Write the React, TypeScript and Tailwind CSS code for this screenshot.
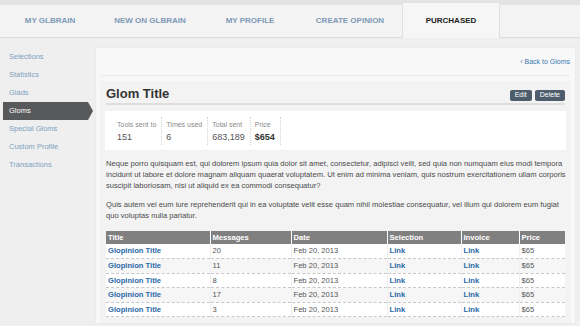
const tabs = ["MY GLBRAIN", "NEW ON GLBRAIN", "MY PROFILE", "CREATE OPINION", "PURCHASED"];
const side = ["Selections", "Statistics", "Glads", "Gloms", "Special Gloms", "Custom Profile", "Transactions"];
const stats = [
  { label: "Tools sent to", value: "151" },
  { label: "Times used", value: "6" },
  { label: "Total sent", value: "683,189" },
  { label: "Price", value: "$654", bold: true },
];
const rows = ["20", "11", "8", "17", "3"];

export default function App() {
  return (
    <div className="w-[580px] h-[326px] overflow-hidden bg-[#efefef] font-['Liberation_Sans',Arial,sans-serif]">
      {/* top nav */}
      <div className="h-[5px] bg-[#e4e4e4]"></div>
      <div className="h-[33px] flex bg-[#f3f3f3] border-b border-[#dcdcdc]">
        {tabs.map((t) => {
          const active = t === "PURCHASED";
          return (
            <div
              key={t}
              className={
                active
                  ? "w-[98px] ml-[2px] -mt-[3px] h-[36px] flex items-center justify-center bg-[#f6f6f6] border-x border-t border-[#e0e0e0] text-[8px] font-bold text-[#222]"
                  : "w-[100px] flex items-center justify-center text-[8px] font-bold text-[#7d9ab6]"
              }
            >
              {t}
            </div>
          );
        })}
      </div>

      <div className="flex pt-[9px]">
        {/* sidebar */}
        <div className="w-[95px] shrink-0 pt-[1px]">
          {side.map((s) => {
            const active = s === "Gloms";
            return active ? (
              <div key={s} className="relative h-[18px] ml-[3px] w-[85px] bg-[#58595b] flex items-center pl-[6px] text-[7.5px] text-white">
                {s}
                <div className="absolute right-[-5px] top-0 w-0 h-0 border-y-[9px] border-y-transparent border-l-[5px] border-l-[#58595b]"></div>
              </div>
            ) : (
              <div key={s} className="h-[18px] flex items-center pl-[9px] text-[7.5px] text-[#80a2c0]">
                {s}
              </div>
            );
          })}
        </div>

        {/* main panel */}
        <div className="w-[481px] bg-[#f8f8f8] border border-[#ebebeb] px-[4px]">
          <div className="h-[28px] flex items-end justify-end pb-[8px] border-b border-[#e8e8e8] mx-[1px]">
            <span className="text-[7px] text-[#3a77b0]">‹ Back to Gloms</span>
          </div>
          <div className="mt-[5px] bg-[#f3f3f3] px-[5px] pt-[4px] pb-[6px]">
            <div className="flex items-end justify-between border-b-2 border-[#dedede] mx-[1px]">
              <span className="text-[13px] font-bold text-[#333] leading-[18px]">Glom Title</span>
              <div className="flex gap-[3px] mb-[2px]">
                <span className="h-[11px] px-[5px] rounded-[2px] bg-[#4e5d6b] text-white text-[7px] flex items-center">Edit</span>
                <span className="h-[11px] px-[5px] rounded-[2px] bg-[#4e5d6b] text-white text-[7px] flex items-center">Delete</span>
              </div>
            </div>

            <div className="mt-[6px] bg-white h-[39px] flex items-center px-[8px]">
              {stats.map((s) => (
                <div key={s.label} className="flex flex-col pl-[4px] pr-[5px] pt-[2px] h-[28px] border-r border-dotted border-[#d4d4d4]">
                  <span className="text-[7px] text-[#8a8a8a] leading-[12px]">{s.label}</span>
                  <span className={s.bold ? "text-[9px] font-bold text-[#333] leading-[12px]" : "text-[9px] text-[#555] leading-[12px]"}>{s.value}</span>
                </div>
              ))}
            </div>

            <p className="mt-[8px] text-[7.6px] leading-[11px] text-[#4a4a4a] pl-[1px]">
              Neque porro quisquam est, qui dolorem ipsum quia dolor sit amet, consectetur, adipisci velit, sed quia non numquam eius modi tempora incidunt ut labore et dolore magnam aliquam quaerat voluptatem. Ut enim ad minima veniam, quis nostrum exercitationem ullam corporis suscipit laboriosam, nisi ut aliquid ex ea commodi consequatur?
            </p>
            <p className="mt-[8px] text-[7.6px] leading-[11px] text-[#4a4a4a] pl-[1px]">
              Quis autem vel eum iure reprehenderit qui in ea voluptate velit esse quam nihil molestiae consequatur, vel illum qui dolorem eum fugiat quo voluptas nulla pariatur.
            </p>

            <table className="mt-[10px] ml-[1px] w-[459px] border-collapse text-[7.6px]">
              <thead>
                <tr className="bg-[#808080] text-white font-bold h-[13px] text-left">
                  <th className="w-[104px] pl-[2px] border-r border-white font-bold">Title</th>
                  <th className="w-[81px] pl-[2px] border-r border-white font-bold">Messages</th>
                  <th className="w-[96px] pl-[2px] border-r border-white font-bold">Date</th>
                  <th className="w-[74px] pl-[2px] border-r border-white font-bold">Selection</th>
                  <th className="w-[58px] pl-[2px] border-r border-white font-bold">Invoice</th>
                  <th className="pl-[2px] font-bold">Price</th>
                </tr>
              </thead>
              <tbody>
                {rows.map((m, i) => (
                  <tr key={i} className={i % 2 === 0 ? "bg-white h-[14.5px] border-b border-dashed border-[#c8c8c8]" : "bg-[#f6f6f6] h-[14.5px] border-b border-dashed border-[#c8c8c8]"}>
                    <td className="pl-[2px] font-bold text-[#2a6aa8] border-r border-[#f0f0f0]">Glopinion Title</td>
                    <td className="pl-[2px] text-[#555] border-r border-[#f0f0f0]">{m}</td>
                    <td className="pl-[2px] text-[#555] border-r border-[#f0f0f0]">Feb 20, 2013</td>
                    <td className="pl-[2px] font-bold text-[#2a6aa8] border-r border-[#f0f0f0]">Link</td>
                    <td className="pl-[2px] font-bold text-[#2a6aa8] border-r border-[#f0f0f0]">Link</td>
                    <td className="pl-[2px] text-[#555]">$65</td>
                  </tr>
                ))}
              </tbody>
            </table>
          </div>
        </div>
      </div>
    </div>
  );
}
